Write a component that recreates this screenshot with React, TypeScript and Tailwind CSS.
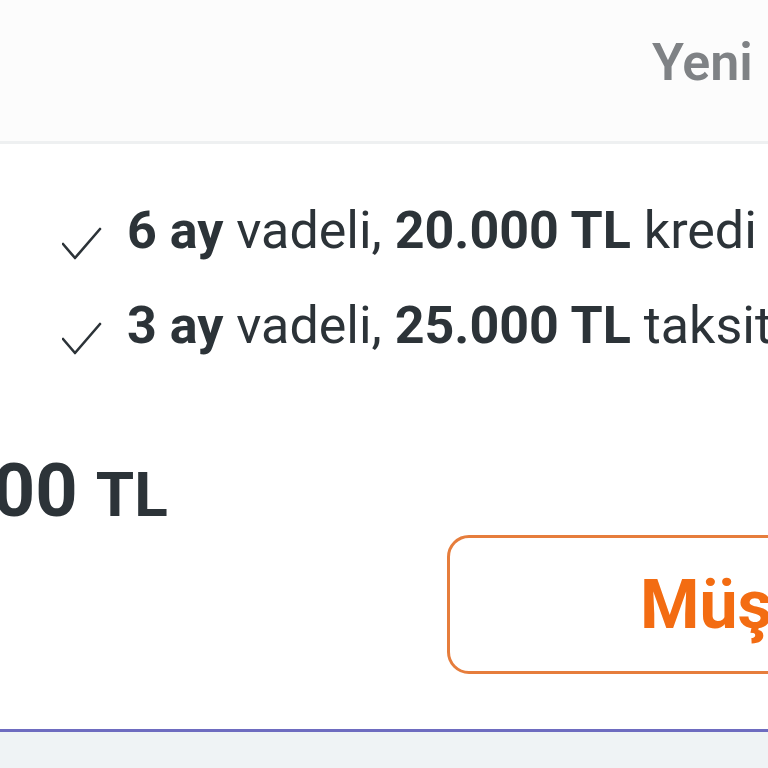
import React from 'react';

const font = { fontFamily: 'Roboto, "Noto Sans", Arial, sans-serif' };

function Check() {
  return (
    <svg width="40" height="34" viewBox="0 0 40 34" className="shrink-0" fill="none">
      <polyline points="1,17 13,31 38,2" stroke="#2c3338" strokeWidth="2.6" strokeLinecap="round" strokeLinejoin="round" />
    </svg>
  );
}

export default function App() {
  const features = [
    { months: '6 ay', amount: '20.000 TL', rest: 'kredi limiti' },
    { months: '3 ay', amount: '25.000 TL', rest: 'taksit imkanı' },
  ];

  return (
    <div className="w-[768px] h-[768px] overflow-hidden bg-white flex flex-col" style={font}>
      {/* Header */}
      <div className="h-[141px] shrink-0 bg-[#fcfcfc] flex items-center pl-[652px] whitespace-nowrap">
        <span className="text-[52px] leading-none font-semibold text-[#7f8285] mt-[-16px]">Yeni Müşteri</span>
      </div>
      <div className="h-[3px] shrink-0 bg-[#eef0f1]" />

      {/* Features */}
      <div className="flex flex-col pt-[39px] pl-[62px] shrink-0">
        {features.map((f) => (
          <div key={f.months} className="flex items-center h-[95px] whitespace-nowrap text-[52px] leading-[95px] text-[#2c3338]">
            <span className="mt-[26px] mr-[25px] flex"><Check /></span>
            <span>
              <span className="font-bold">{f.months}</span> vadeli, <span className="font-bold">{f.amount}</span> {f.rest}
            </span>
          </div>
        ))}
      </div>

      {/* Price */}
      <div className="flex items-baseline whitespace-nowrap ml-[-156px] mt-[81px] h-[74px] leading-none font-bold text-[#2c3338] shrink-0">
        <span className="text-[74px]">20.000</span>
        <span className="text-[62px] ml-[18px]">TL</span>
      </div>

      {/* Button */}
      <div className="ml-[447px] mt-[7px] shrink-0">
        <button className="w-[700px] h-[139px] border-[3px] border-[#e67d3c] rounded-[22px] flex items-center pl-[190px] whitespace-nowrap">
          <span className="text-[68px] leading-none font-bold text-[#f36c12]">Müşteri Ol</span>
        </button>
      </div>

      <div className="flex-1" />
      <div className="h-[3px] shrink-0 bg-[#6e6cc0]" />
      <div className="h-[36px] shrink-0 bg-[#eff3f5]" />
    </div>
  );
}
